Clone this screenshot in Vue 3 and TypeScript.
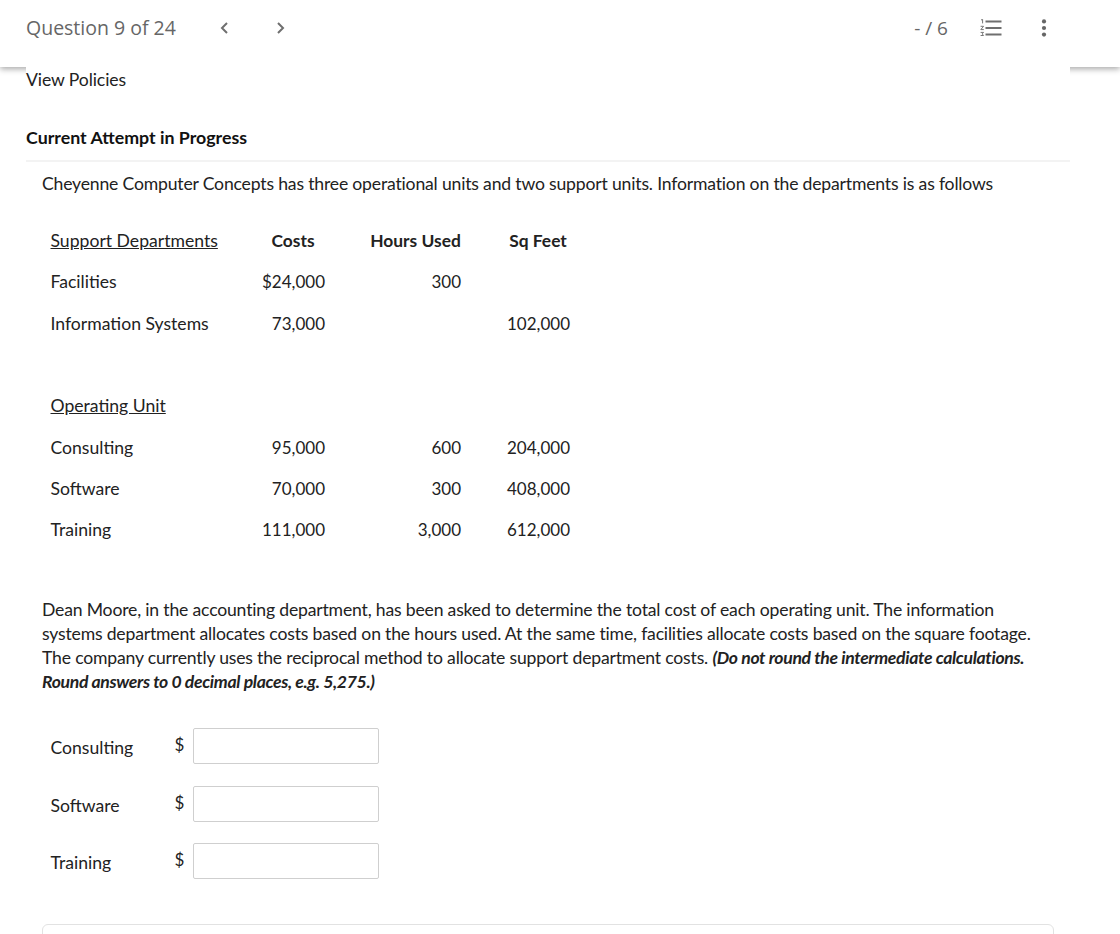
<script setup lang="ts">
interface Row { label: string; costs: string; hours: string; sqft: string; kind?: 'head' | 'sub' | 'blank' }
const rows: Row[] = [
  { label: 'Support Departments', costs: 'Costs', hours: 'Hours Used', sqft: 'Sq Feet', kind: 'head' },
  { label: 'Facilities', costs: '$24,000', hours: '300', sqft: '' },
  { label: 'Information Systems', costs: '73,000', hours: '', sqft: '102,000' },
  { label: '', costs: '', hours: '', sqft: '', kind: 'blank' },
  { label: 'Operating Unit', costs: '', hours: '', sqft: '', kind: 'sub' },
  { label: 'Consulting', costs: '95,000', hours: '600', sqft: '204,000' },
  { label: 'Software', costs: '70,000', hours: '300', sqft: '408,000' },
  { label: 'Training', costs: '111,000', hours: '3,000', sqft: '612,000' },
]
const answers = ['Consulting', 'Software', 'Training']
</script>

<template>
  <div class="page">
    <header class="topbar">
      <div class="top-left">
        <span class="qcount">Question 9 of 24</span>
        <svg class="chev first" width="10" height="14" viewBox="0 0 10 14"><path d="M8 2 L3 7 L8 12" fill="none" stroke="#6f6f6f" stroke-width="2"/></svg>
        <svg class="chev" width="10" height="14" viewBox="0 0 10 14"><path d="M2 2 L7 7 L2 12" fill="none" stroke="#6f6f6f" stroke-width="2"/></svg>
      </div>
      <div class="top-right">
        <span class="score">- / 6</span>
        <svg class="list-icon" width="22" height="18" viewBox="0 0 22 18">
          <path d="M5.5 2.5h16M5.5 9h16M5.5 15.5h16" stroke="#6f6f6f" stroke-width="1.9" fill="none"/>
          <path d="M1 1l1.6-.6v4M.6 7.3h3L.8 10.6h3M.6 13.4h3l-1.4 1.5 1.4 1.6H.6" stroke="#777" stroke-width="1" fill="none"/>
        </svg>
        <svg class="dots" width="6" height="18" viewBox="0 0 6 18">
          <circle cx="3" cy="2.4" r="2.1" fill="#666"/><circle cx="3" cy="9" r="2.1" fill="#666"/><circle cx="3" cy="15.6" r="2.1" fill="#666"/>
        </svg>
      </div>
    </header>

    <main class="sheet">
      <div class="policies">View Policies</div>
      <h2 class="attempt">Current Attempt in Progress</h2>
      <section class="question">
        <p class="intro">Cheyenne Computer Concepts has three operational units and two support units. Information on the departments is as follows</p>

        <div class="data">
          <template v-for="(r, i) in rows" :key="i">
            <div class="cell label" :class="{ under: r.kind === 'head' || r.kind === 'sub' }"><span>{{ r.label }}</span></div>
            <div class="cell num" :class="{ hd: r.kind === 'head' }">{{ r.costs }}</div>
            <div class="cell num" :class="{ hd: r.kind === 'head' }">{{ r.hours }}</div>
            <div class="cell num" :class="{ hd: r.kind === 'head' }">{{ r.sqft }}</div>
          </template>
        </div>

        <p class="body">Dean Moore, in the accounting department, has been asked to determine the total cost of each operating unit. The information systems department allocates costs based on the hours used. At the same time, facilities allocate costs based on the square footage. The company currently uses the reciprocal method to allocate support department costs. <b><i>(Do not round the intermediate calculations. Round answers to 0 decimal places, e.g. 5,275.)</i></b></p>

        <div class="answers">
          <div v-for="a in answers" :key="a" class="answer">
            <span class="a-label">{{ a }}</span>
            <span class="dollar">$</span>
            <input class="field" type="text" />
          </div>
        </div>

        <div class="next-card"></div>
      </section>
    </main>
  </div>
</template>

<style>
html, body { margin: 0; background: #fff; overflow: hidden; }
</style>

<style scoped>
.page {
  width: 1120px;
  height: 934px;
  overflow: hidden;
  background: #fff;
  font-family: Lato, "Liberation Sans", sans-serif;
  font-size: 17.6px;
  color: #222;
}
.topbar {
  height: 67px;
  box-sizing: border-box;
  padding: 0 73px 11px 26px;
  display: flex;
  justify-content: space-between;
  align-items: center;
  box-shadow: 0 2px 6px rgba(0, 0, 0, 0.35);
  background: #fff;
}
.top-left, .top-right { display: flex; align-items: center; }
.qcount {
  font-family: "Open Sans", sans-serif;
  font-size: 19.5px;
  color: #666;
  padding-bottom: 1px;
}
.chev.first { margin-left: 43px; margin-right: 47px; }
.score {
  font-family: "Open Sans", sans-serif;
  font-size: 19px;
  color: #666;
}
.list-icon { margin-left: 32px; }
.dots { margin-left: 39px; }
.sheet {
  position: relative;
  width: 1044px;
  margin-left: 26px;
  background: #fff;
}
.policies { height: 24px; padding-top: 1px; line-height: 24px; color: #222; letter-spacing: -0.1px; }
.attempt {
  margin: 0;
  padding-top: 33px;
  line-height: 24px;
  height: 35px;
  font-size: 17.8px;
  font-weight: 700;
  color: #111;
  border-bottom: 2px solid #f3f3f3;
}
.question { padding: 10px 16px 0; }
.intro, .body { margin: 0; line-height: 24px; color: #222; letter-spacing: -0.18px; }
.body b { letter-spacing: -0.34px; }
.data {
  margin: 24px 0 0 8.5px;
  display: grid;
  grid-template-columns: 165.5px 64px 91px 64px;
  column-gap: 45px;
  grid-auto-rows: 41.3px;
  align-items: center;
}
.cell { white-space: nowrap; }
.num { text-align: right; font-size: 17px; }
.num.hd { text-align: center; font-weight: 700; font-size: 17.4px; }
.under span { text-decoration: underline; }
.body { margin-top: 48px; }
.answers { margin-top: 34px; margin-left: 8.5px; display: flex; flex-direction: column; gap: 21.5px; }
.answer { display: flex; align-items: center; height: 36px; }
.a-label { width: 124px; padding-top: 2.5px; }
.dollar { width: 18.5px; padding-bottom: 3px; font-size: 17px; }
.field {
  width: 186px;
  height: 36px;
  box-sizing: border-box;
  border: 1px solid #cfcfcf;
  border-radius: 2px;
  background: #fff;
  padding: 0;
}
.next-card {
  margin-top: 45px;
  height: 40px;
  border: 1px solid #e2e2e2;
  border-radius: 6px;
}
</style>
